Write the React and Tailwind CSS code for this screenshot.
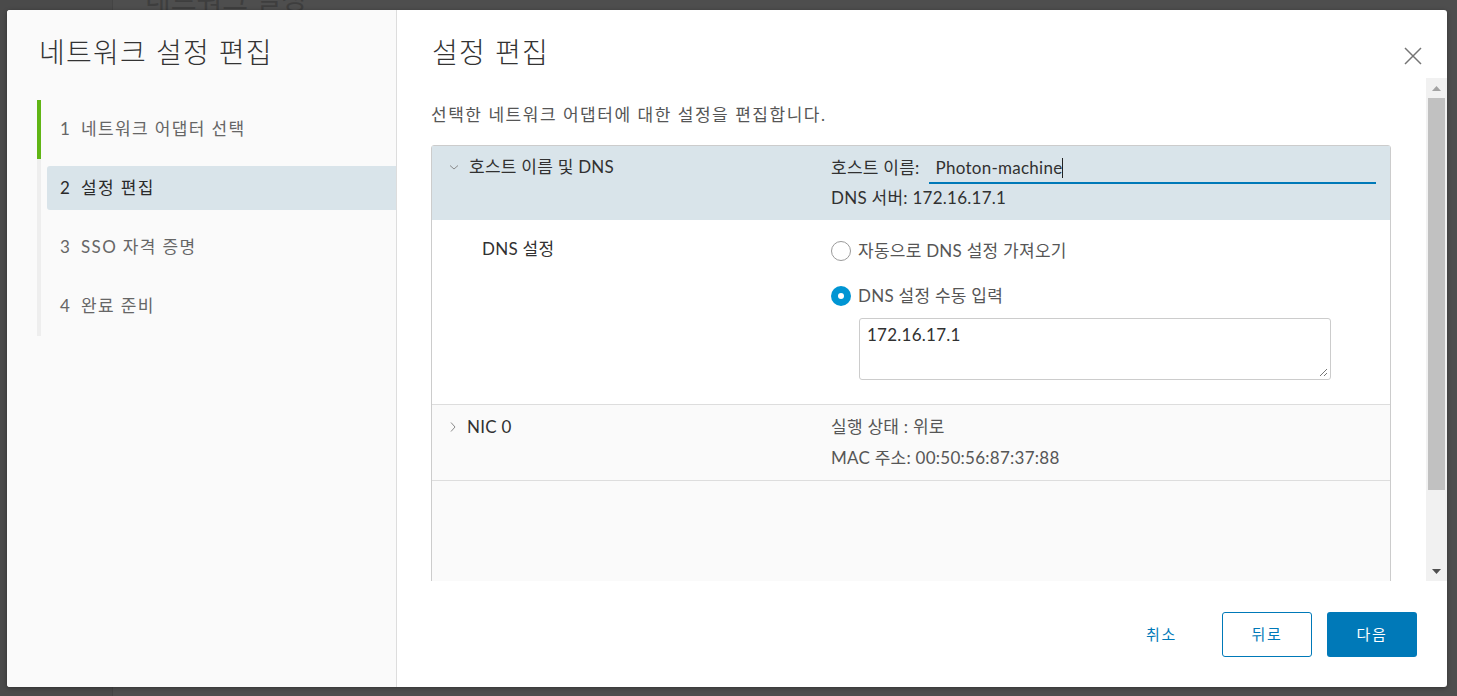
import React from 'react';

const font = { fontFamily: '"Lato", "Noto Sans CJK KR", sans-serif' };

const steps = [
  { n: 1, label: '네트워크 어댑터 선택', done: true },
  { n: 2, label: '설정 편집', active: true },
  { n: 3, label: 'SSO 자격 증명' },
  { n: 4, label: '완료 준비' },
];

const ChevronDown = () => (
  <svg width="10" height="8" viewBox="0 0 10 8" fill="none" className="shrink-0">
    <path d="M1 2.5 L5 6 L9 2.5" stroke="#8a8a8a" strokeWidth="1" />
  </svg>
);

const ChevronRight = () => (
  <svg width="8" height="12" viewBox="0 0 8 12" fill="none" className="shrink-0">
    <path d="M2 1.5 L6 6 L2 10.5" stroke="#8a8a8a" strokeWidth="1" />
  </svg>
);

const Radio = ({ checked }) =>
  checked ? (
    <span className="w-[20px] h-[20px] rounded-full bg-[#0095d3] flex items-center justify-center shrink-0">
      <span className="w-[6px] h-[6px] rounded-full bg-white" />
    </span>
  ) : (
    <span className="w-[20px] h-[20px] rounded-full border border-[#9a9a9a] bg-white shrink-0" />
  );

export default function App() {
  return (
    <div className="relative w-[1457px] h-[696px] overflow-hidden bg-[#4e4e4e]" style={font}>
      {/* dimmed page behind */}
      <div className="absolute inset-0 flex">
        <div className="w-[113px] h-full bg-[#4a4a4a] border-r border-[#444]" />
        <div className="flex-1 relative">
          <div className="absolute left-[32px] -top-[22px] text-[28px] text-[#3e3e3e]">네트워크 설정</div>
        </div>
      </div>

      {/* modal */}
      <div className="absolute left-[7px] top-[10px] w-[1440px] h-[677px] bg-white rounded-[3px] shadow-[0_1px_4px_rgba(0,0,0,0.35)] flex overflow-hidden">
        {/* left nav */}
        <div className="w-[390px] h-full bg-[#fafafa] border-r border-[#dddddd] shrink-0">
          <h2 className="pl-[32px] pt-[24px] text-[28px] leading-[36px] font-light tracking-[0.045em] text-[#333]">네트워크 설정 편집</h2>
          <div className="mt-[30px] ml-[30px]">
            {steps.map((s) => (
              <div
                key={s.n}
                className={`h-[59px] py-[7px] pl-[6px] border-l-4 ${s.done ? 'border-[#60b515]' : 'border-[#eeeeee]'}`}
              >
                <div
                  className={`h-[44px] rounded-l-[3px] pl-[13px] flex items-center text-[17px] tracking-[0.08em] ${
                    s.active ? 'bg-[#d9e4ea] text-[#2a2a2a]' : 'text-[#666]'
                  }`}
                >
                  <span className="w-[21px]">{s.n}</span>
                  <span>{s.label}</span>
                </div>
              </div>
            ))}
          </div>
        </div>

        {/* right content */}
        <div className="flex-1 flex flex-col relative">
          <button className="absolute right-[25px] top-[37px] w-[18px] h-[18px]">
            <svg width="18" height="18" viewBox="0 0 18 18" fill="none">
              <path d="M1 1 L17 17 M17 1 L1 17" stroke="#757575" strokeWidth="1.5" />
            </svg>
          </button>
          <h2 className="pl-[35px] pt-[24px] h-[68px] text-[28px] leading-[36px] font-light tracking-[0.045em] text-[#333]">설정 편집</h2>

          <div className="h-[503px] flex">
            <div className="flex-1 overflow-hidden pl-[34px] pr-[35px]">
              <p className="pt-[25px] text-[17px] leading-[24px] tracking-[0.09em] text-[#565656]">
                선택한 네트워크 어댑터에 대한 설정을 편집합니다.
              </p>
              <div className="mt-[18px] border border-[#cccccc] rounded-t-[3px] text-[17px] leading-[24px] tracking-[0.015em] text-[#313131]">
                {/* host / DNS header */}
                <div className="h-[74px] bg-[#d9e4ea] flex">
                  <div className="w-[399px] pl-[17px] pt-[9px]">
                    <div className="flex items-center gap-[10px] h-[24px]">
                      <ChevronDown />
                      <span>호스트 이름 및 DNS</span>
                    </div>
                  </div>
                  <div className="flex-1 pr-[14px] pt-[8px]">
                    <div className="flex h-[30px]">
                      <span className="flex items-center pb-[2px] mr-[9px]">호스트 이름:</span>
                      <div className="flex-1 border-b-2 border-[#0079b8] flex items-center pl-[7px]">
                        <span>Photon-machine</span>
                        <span className="w-px h-[20px] bg-[#222]" />
                      </div>
                    </div>
                    <div className="mt-[2px]">DNS 서버: 172.16.17.1</div>
                  </div>
                </div>

                {/* DNS settings */}
                <div className="h-[184px] bg-white flex">
                  <div className="w-[399px] pl-[50px] pt-[17px]">DNS 설정</div>
                  <div className="flex-1 pt-[19px]">
                    <div className="flex items-center gap-[7px] h-[24px] text-[#565656]">
                      <Radio />
                      <span>자동으로 DNS 설정 가져오기</span>
                    </div>
                    <div className="flex items-center gap-[7px] h-[24px] mt-[21px] text-[#565656]">
                      <Radio checked />
                      <span>DNS 설정 수동 입력</span>
                    </div>
                    <div className="relative ml-[28px] mt-[10px] w-[472px] h-[62px] border border-[#cccccc] rounded-[3px] px-[7px] pt-[4px] text-[#313131]">
                      172.16.17.1
                      <svg className="absolute right-[2px] bottom-[2px]" width="10" height="10" viewBox="0 0 10 10" fill="none">
                        <path d="M9 2 L2 9 M9 6 L6 9" stroke="#777" strokeWidth="1" />
                      </svg>
                    </div>
                  </div>
                </div>

                {/* NIC 0 */}
                <div className="bg-[#fafafa] border-t border-b border-[#dddddd] flex pt-[10px] pb-[10px]">
                  <div className="w-[399px] pl-[17px]">
                    <div className="flex items-center gap-[10px] h-[24px]">
                      <ChevronRight />
                      <span>NIC 0</span>
                    </div>
                  </div>
                  <div className="flex-1 text-[#565656]">
                    <div className="h-[24px]">실행 상태 : 위로</div>
                    <div className="h-[24px] mt-[7px]">MAC 주소: 00:50:56:87:37:88</div>
                  </div>
                </div>
                <div className="h-[200px] bg-[#fafafa]" />
              </div>
            </div>

            {/* scrollbar */}
            <div className="w-[21px] h-full bg-[#f1f1f1] flex flex-col shrink-0">
              <div className="h-[20px] flex items-center justify-center">
                <svg width="9" height="5" viewBox="0 0 9 5"><path d="M0 5 L4.5 0 L9 5 Z" fill="#a3a3a3" /></svg>
              </div>
              <div className="h-[392px] mx-[2px] bg-[#c1c1c1]" />
              <div className="flex-1" />
              <div className="h-[20px] flex items-center justify-center">
                <svg width="9" height="5" viewBox="0 0 9 5"><path d="M0 0 L4.5 5 L9 0 Z" fill="#505050" /></svg>
              </div>
            </div>
          </div>

          {/* footer */}
          <div className="flex-1 flex justify-end items-start pt-[31px] pr-[30px] gap-[15px]">
            <button className="w-[91px] h-[45px] text-[15px] tracking-[0.12em] text-[#0079b8]">취소</button>
            <button className="w-[90px] h-[45px] rounded-[3px] border border-[#0079b8] text-[15px] tracking-[0.12em] text-[#0079b8] bg-white">뒤로</button>
            <button className="w-[90px] h-[45px] rounded-[3px] bg-[#0079b8] text-[15px] tracking-[0.12em] text-white">다음</button>
          </div>
        </div>
      </div>
    </div>
  );
}
